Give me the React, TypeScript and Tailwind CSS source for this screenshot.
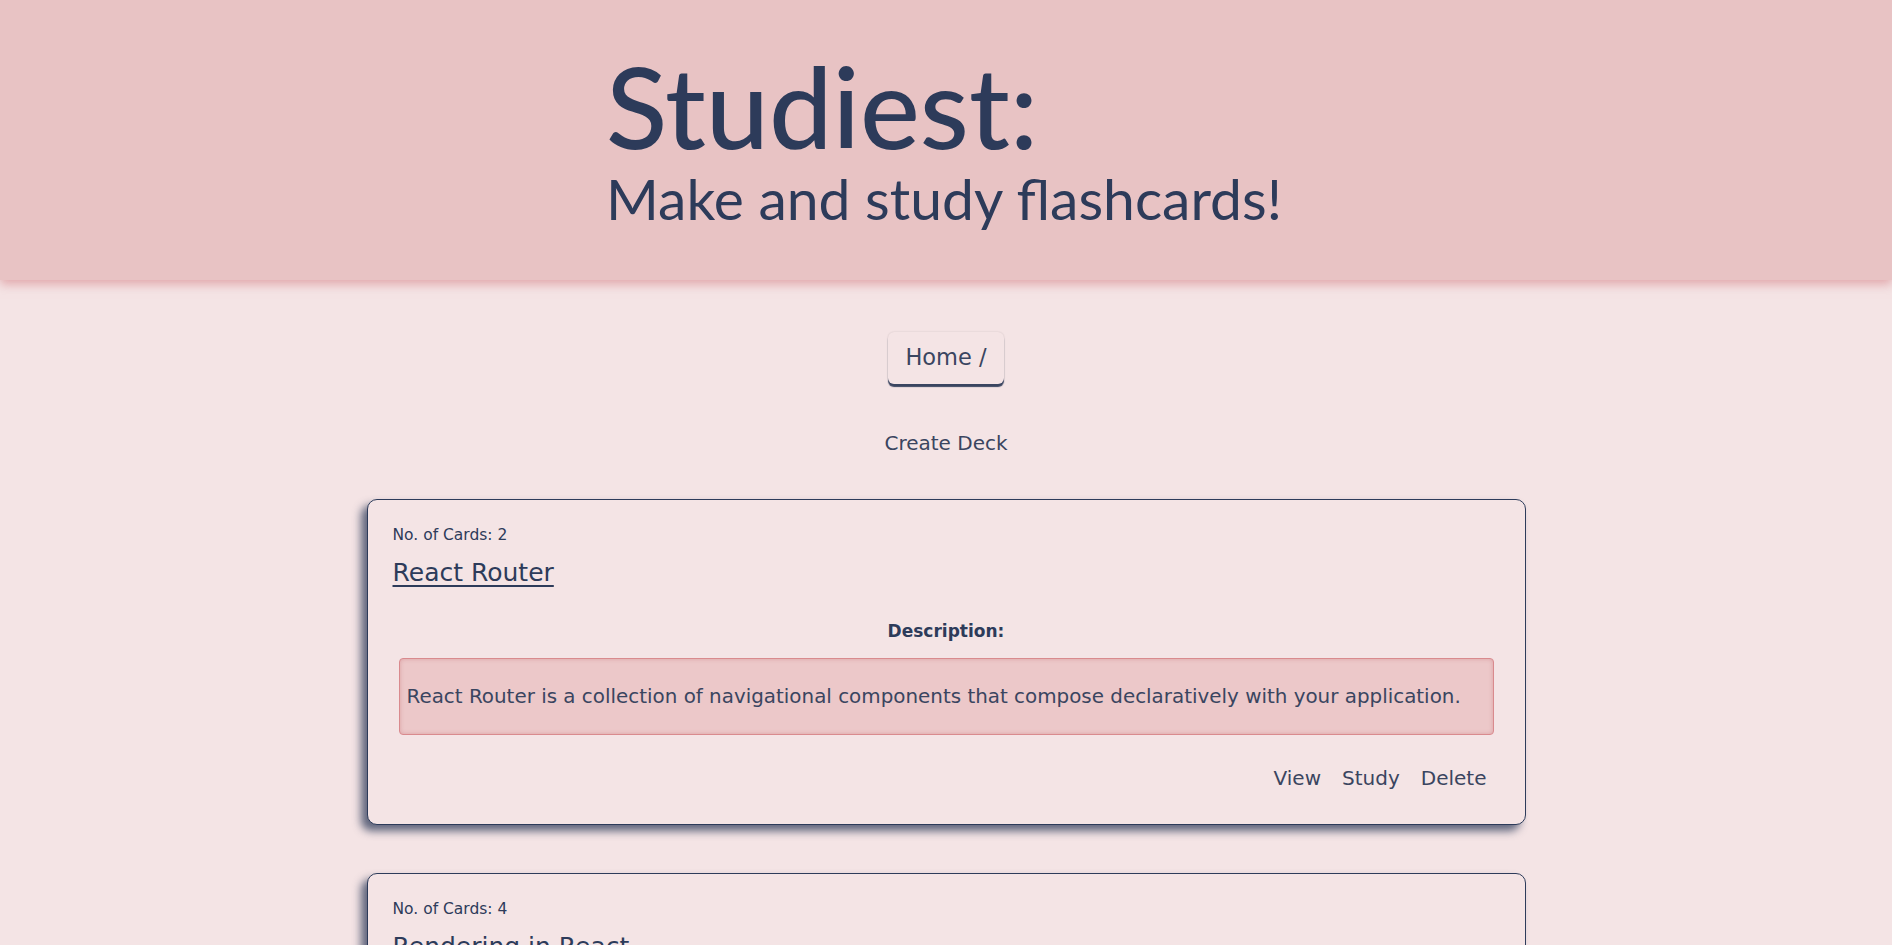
type Deck = { id: number; count: number; name: string; description: string };

const decks: Deck[] = [
  {
    id: 1,
    count: 2,
    name: "React Router",
    description:
      "React Router is a collection of navigational components that compose declaratively with your application.",
  },
  {
    id: 2,
    count: 4,
    name: "Rendering in React",
    description:
      "React's component structure allows for quickly building a complex web application that relies on DOM manipulation.",
  },
];

function DeckCard({ deck }: { deck: Deck }) {
  return (
    <div className="w-[1159px] mx-auto rounded-[10px] border border-[#2d3b5a] bg-[#f4e4e5] px-[25px] pt-[24px] pb-[27px] shadow-[-6px_6px_8px_rgba(45,59,90,0.75)]">
      <p className="text-[15.5px] leading-[22px] text-[#2d3b5a]">No. of Cards: {deck.count}</p>
      <a href="#" className="mt-[12px] inline-block text-[25px] leading-[30px] text-[#2d3b5a] underline underline-offset-[4px] decoration-[1.5px]">
        {deck.name}
      </a>
      <p className="mt-[30px] text-center text-[17px] leading-[26px] font-bold text-[#2d3b5a]">Description:</p>
      <div className="mx-[6px] mt-[14px] flex h-[77px] items-center rounded-[4px] border border-[#d98a8e] bg-[#ecc8c9] px-[7px] shadow-[inset_0_0_4px_rgba(200,110,115,0.45)]">
        <p className="text-[19.9px] text-[#3a4560]">{deck.description}</p>
      </div>
      <div className="mt-[24px] flex justify-end gap-[5px] pr-[5px]">
        <button className="px-[8px] py-[4px] text-[20px] text-[#3a4560]">View</button>
        <button className="px-[8px] py-[4px] text-[20px] text-[#3a4560]">Study</button>
        <button className="px-[8px] py-[4px] text-[20px] text-[#3a4560]">Delete</button>
      </div>
    </div>
  );
}

export default function App() {
  return (
    <div className="min-h-screen bg-[#f4e4e5] font-['DejaVu_Sans',sans-serif] text-[#2d3b5a]">
      {/* Header */}
      <header className="h-[280px] bg-[#e8c3c4] shadow-[0_4px_10px_rgba(220,150,155,0.8)] font-['Lato',sans-serif]">
        <div className="w-[680px] mx-auto pt-[45px]">
          <h1 className="text-[113px] leading-[120px] font-medium text-[#2d3b5a]">Studiest:</h1>
          <h2 className="mt-[3px] whitespace-nowrap text-[57px] leading-[60px] font-normal text-[#2d3b5a]">Make and study flashcards!</h2>
        </div>
      </header>

      {/* Breadcrumb */}
      <nav className="flex justify-center pt-[52px]">
        <button className="h-[52px] rounded-[6px] bg-[#f4e4e5] px-[17px] text-[22.5px] text-[#3a4560] shadow-[0_3px_1px_#3a4560,0_0_2px_rgba(0,0,0,0.15)]">
          Home /
        </button>
      </nav>

      <div className="flex justify-center pt-[44px]">
        <button className="text-[20px] text-[#3a4560]">Create Deck</button>
      </div>

      {/* Decks */}
      <div className="flex flex-col gap-[48px] pt-[41px] pb-[40px]">
        {decks.map((d) => (
          <DeckCard key={d.id} deck={d} />
        ))}
      </div>
    </div>
  );
}
